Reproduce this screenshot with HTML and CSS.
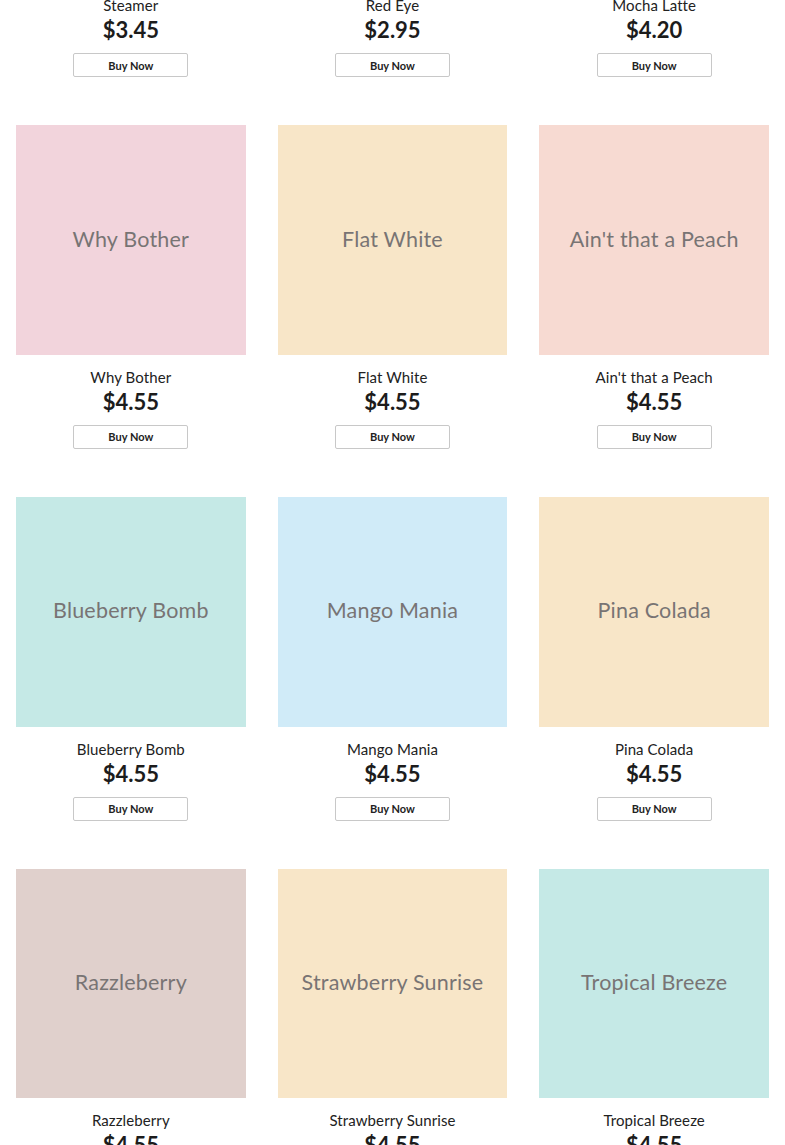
FILE: index.html
```html
<!DOCTYPE html>
<html lang="en">
<head>
<meta charset="utf-8">
<title>Drinks</title>
<link rel="stylesheet" href="styles.css">
</head>
<body>
<main class="grid">
  <div class="card"><div class="thumb c-steamer"><span>Steamer</span></div><div class="name">Steamer</div><div class="price">$3.45</div><button class="buy">Buy Now</button></div>
  <div class="card"><div class="thumb c-redeye"><span>Red Eye</span></div><div class="name">Red Eye</div><div class="price">$2.95</div><button class="buy">Buy Now</button></div>
  <div class="card"><div class="thumb c-mocha"><span>Mocha Latte</span></div><div class="name">Mocha Latte</div><div class="price">$4.20</div><button class="buy">Buy Now</button></div>

  <div class="card"><div class="thumb c-pink"><span>Why Bother</span></div><div class="name">Why Bother</div><div class="price">$4.55</div><button class="buy">Buy Now</button></div>
  <div class="card"><div class="thumb c-cream"><span>Flat White</span></div><div class="name">Flat White</div><div class="price">$4.55</div><button class="buy">Buy Now</button></div>
  <div class="card"><div class="thumb c-peach"><span>Ain't that a Peach</span></div><div class="name">Ain't that a Peach</div><div class="price">$4.55</div><button class="buy">Buy Now</button></div>

  <div class="card"><div class="thumb c-teal"><span>Blueberry Bomb</span></div><div class="name">Blueberry Bomb</div><div class="price">$4.55</div><button class="buy">Buy Now</button></div>
  <div class="card"><div class="thumb c-blue"><span>Mango Mania</span></div><div class="name">Mango Mania</div><div class="price">$4.55</div><button class="buy">Buy Now</button></div>
  <div class="card"><div class="thumb c-cream"><span>Pina Colada</span></div><div class="name">Pina Colada</div><div class="price">$4.55</div><button class="buy">Buy Now</button></div>

  <div class="card"><div class="thumb c-mauve"><span>Razzleberry</span></div><div class="name">Razzleberry</div><div class="price">$4.55</div><button class="buy">Buy Now</button></div>
  <div class="card"><div class="thumb c-cream"><span>Strawberry Sunrise</span></div><div class="name">Strawberry Sunrise</div><div class="price">$4.55</div><button class="buy">Buy Now</button></div>
  <div class="card"><div class="thumb c-teal"><span>Tropical Breeze</span></div><div class="name">Tropical Breeze</div><div class="price">$4.55</div><button class="buy">Buy Now</button></div>
</main>
</body>
</html>
```
FILE: styles.css
```css
html, body {
  margin: 0;
  padding: 0;
  background: #ffffff;
  overflow: hidden;
}
body {
  font-family: "Lato", "Open Sans", "Liberation Sans", sans-serif;
  color: #222222;
}
.grid {
  display: grid;
  grid-template-columns: repeat(3, 1fr);
  column-gap: 32px;
  row-gap: 48px;
  padding: 0 16px;
  margin-top: -246.5px;
}
.card {
  display: flex;
  flex-direction: column;
  align-items: center;
}
.thumb {
  width: 100%;
  aspect-ratio: 1 / 1;
  display: flex;
  align-items: center;
  justify-content: center;
}
.thumb span {
  font-size: 21.5px;
  color: #787474;
  letter-spacing: 0.2px;
  margin-bottom: 3px;
}
.c-steamer { background: #efe4d8; }
.c-redeye { background: #e6d2cc; }
.c-mocha { background: #e9ddd0; }
.c-pink { background: #f2d4dc; }
.c-cream { background: #f8e6c8; }
.c-peach { background: #f7dad2; }
.c-teal { background: #c5e9e6; }
.c-blue { background: #d0ebf8; }
.c-mauve { background: #e0d0cc; }
.name {
  margin-top: 12px;
  font-size: 15px;
  line-height: 20px;
  color: #222;
  letter-spacing: 0.1px;
}
.price {
  margin-top: 2px;
  font-size: 22px;
  line-height: 26px;
  font-weight: 700;
  color: #1c1c1c;
}
.buy {
  margin-top: 10px;
  width: 115px;
  height: 24px;
  padding: 0;
  background: #fff;
  border: 1px solid #c8c8c8;
  border-radius: 2px;
  font-family: inherit;
  font-size: 11px;
  font-weight: 700;
  color: #222;
}
```
